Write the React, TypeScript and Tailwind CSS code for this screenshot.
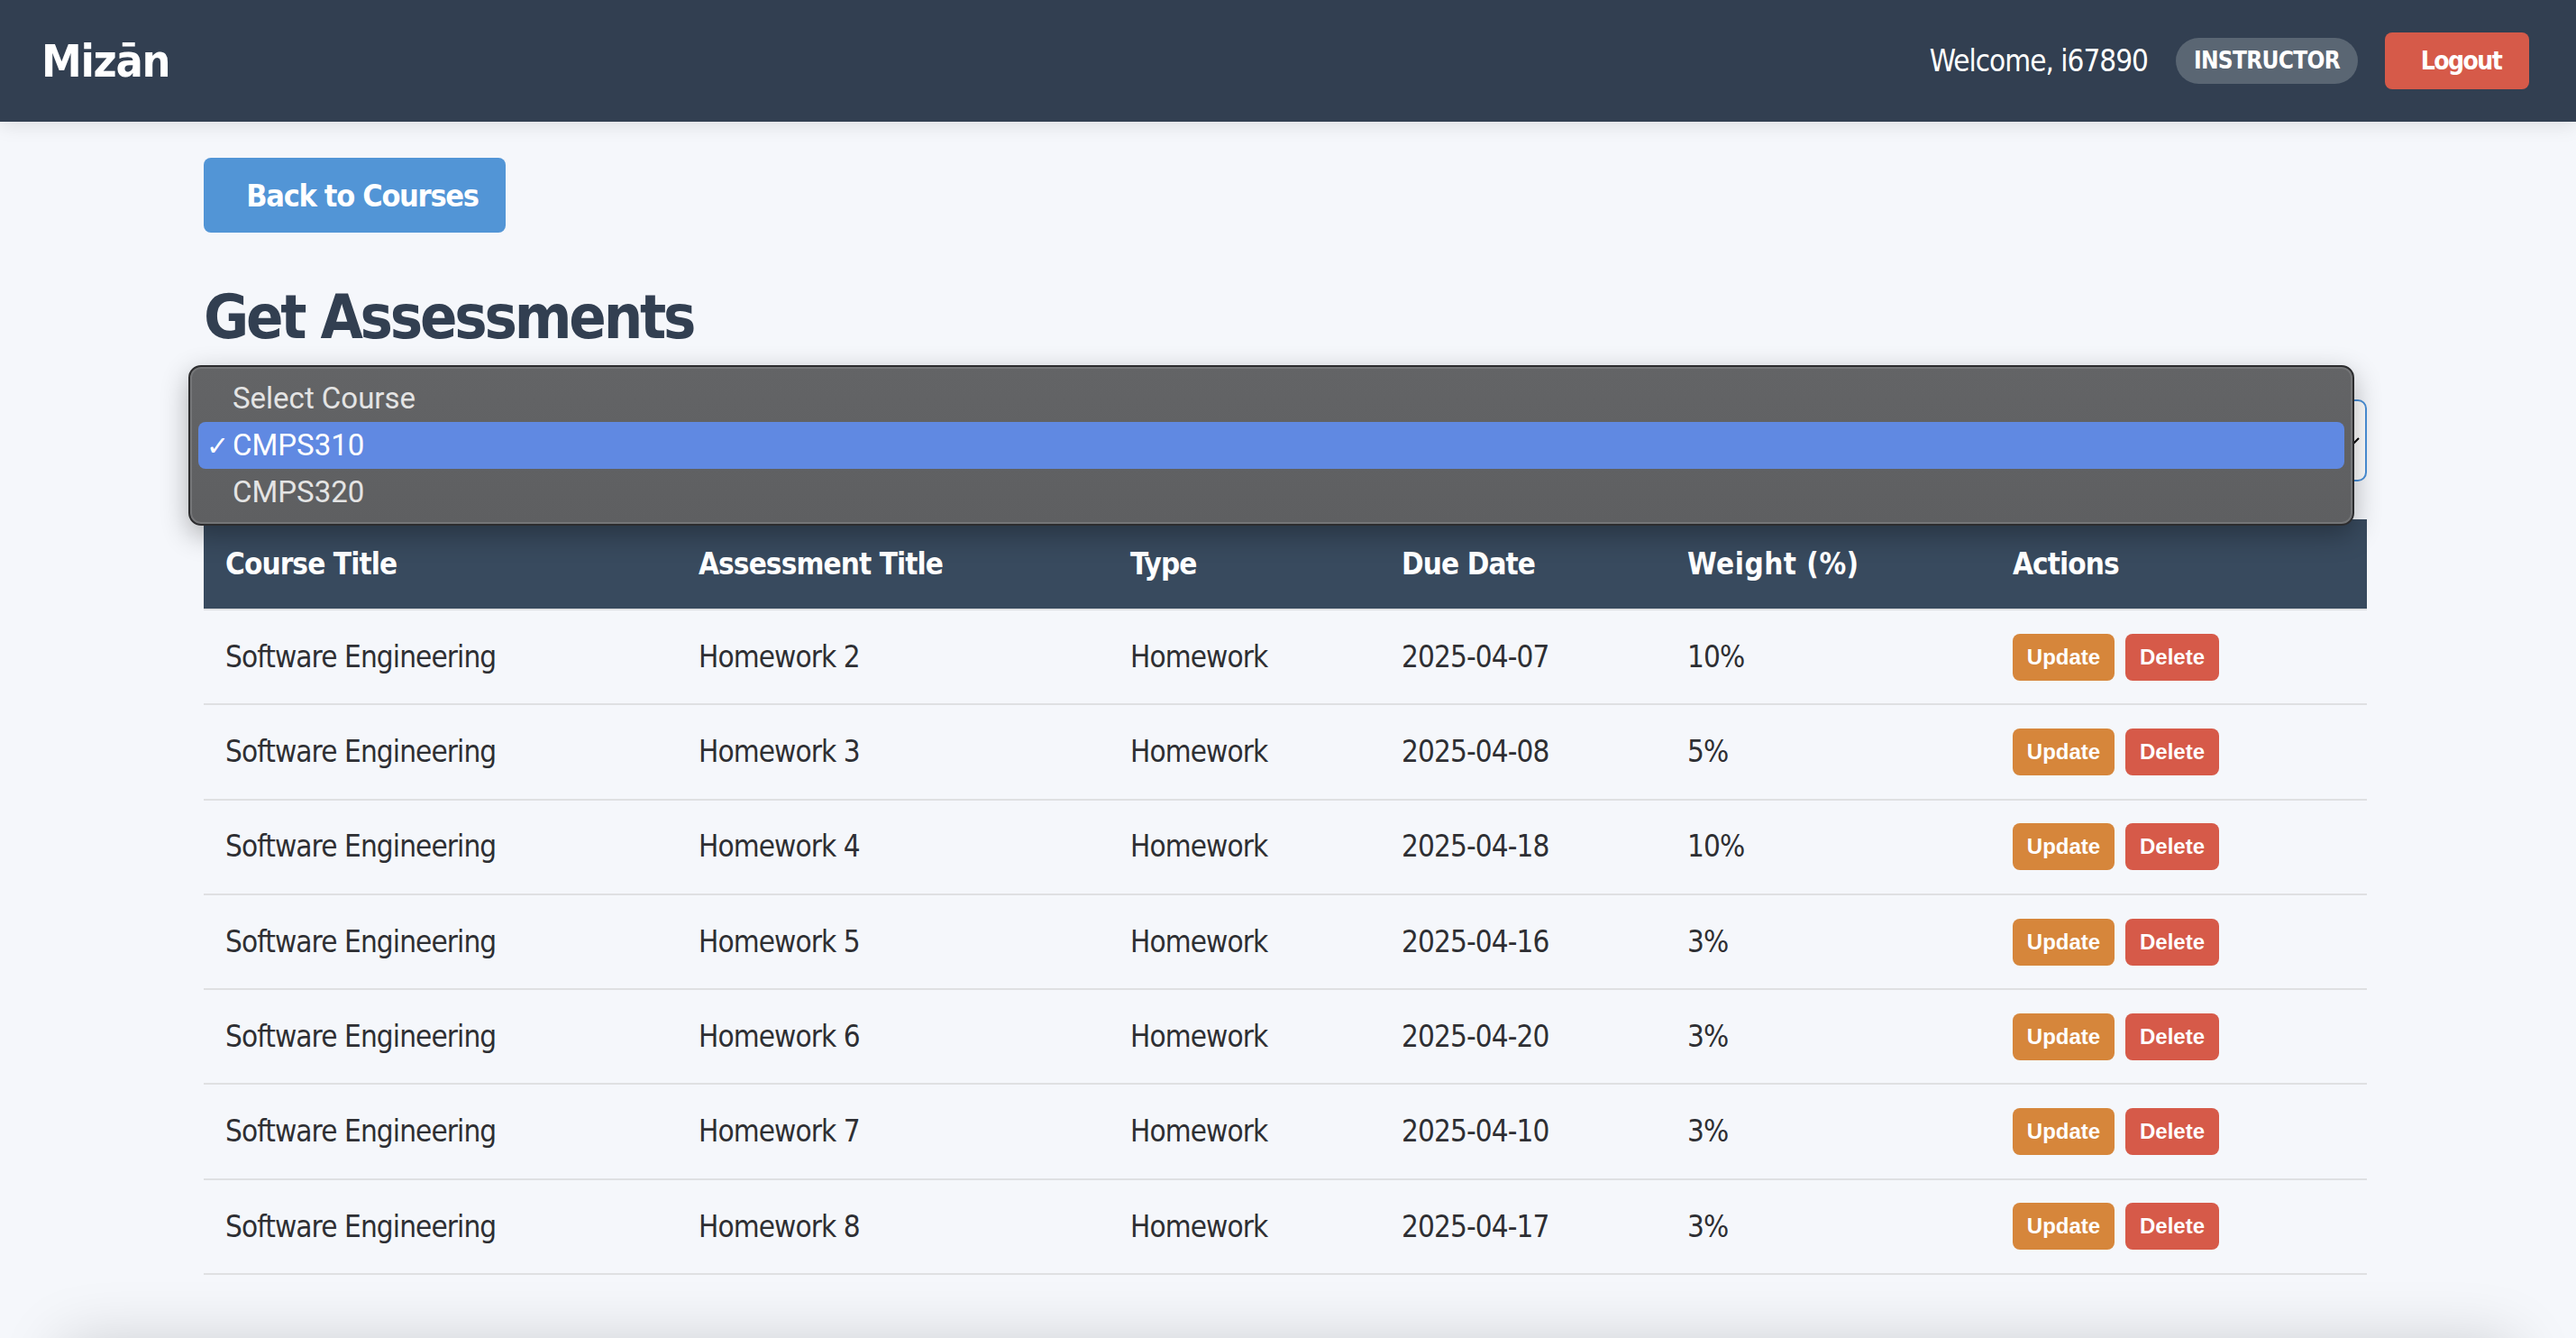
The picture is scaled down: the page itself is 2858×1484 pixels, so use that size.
const rows = [
  { title: "Homework 2", due: "2025-04-07", weight: "10%" },
  { title: "Homework 3", due: "2025-04-08", weight: "5%" },
  { title: "Homework 4", due: "2025-04-18", weight: "10%" },
  { title: "Homework 5", due: "2025-04-16", weight: "3%" },
  { title: "Homework 6", due: "2025-04-20", weight: "3%" },
  { title: "Homework 7", due: "2025-04-10", weight: "3%" },
  { title: "Homework 8", due: "2025-04-17", weight: "3%" },
];

const headers = ["Course Title", "Assessment Title", "Type", "Due Date", "Weight (%)", "Actions"];

export default function App() {
  return (
    <div className="h-[1484px] overflow-hidden bg-[#f5f7fb] font-['DejaVu_Sans',sans-serif] font-stretch-condensed text-[#2e2f33]">
      {/* Header */}
      <header className="relative z-10 flex h-[135px] items-center justify-between bg-[#323f51] pl-[46px] pr-[52px] shadow-[0_4px_20px_rgba(0,0,0,0.1)]">
        <div className="text-[50px] font-bold leading-none tracking-[-1.3px] text-white">Mizān</div>
        <div className="flex items-center">
          <span className="text-[33px] tracking-[-1px] text-white">Welcome, i67890</span>
          <span className="ml-[31px] flex h-[51px] w-[202px] items-center justify-center rounded-full bg-[#5a6673] text-[26px] font-bold tracking-[-0.7px] text-white">
            INSTRUCTOR
          </span>
          <button className="ml-[30px] h-[63px] w-[160px] rounded-lg bg-[#d65a49] pl-[9px] text-[28px] font-bold tracking-[-1.5px] text-white">
            Logout
          </button>
        </div>
      </header>

      <main className="relative px-[226px] pr-[232px] pt-[40px]">
        <button className="h-[83px] w-[335px] rounded-lg bg-[#5295d6] pl-[17px] pt-[2px] text-[34px] font-bold tracking-[-1.3px] text-white">
          Back to Courses
        </button>
        <h1 className="mt-[54px] text-[68px] font-bold leading-[80px] tracking-[-3.2px] text-[#323f51]">Get Assessments</h1>

        {/* Select + open menu */}
        <div className="relative mt-[51px] flex h-[91px] items-center justify-end rounded-[10px] border-2 border-[#4a90d9] bg-white pr-[6px]">
          <svg width="14" height="14" viewBox="0 0 14 14" className="text-black">
            <path d="M1 4l6 6 6-6" fill="none" stroke="currentColor" strokeWidth="2" />
          </svg>
          <div className="absolute left-[-19px] top-[-40px] z-20 flex h-[178px] w-[2403px] flex-col justify-center rounded-[14px] border-2 border-[#2c2c2e] bg-gradient-to-b from-[#636466] to-[#5e5f61] px-[9px] font-['Roboto',sans-serif] font-stretch-normal text-[33px] text-[#e4e4e4] shadow-[inset_0_0_0_2px_#747577,0_10px_30px_rgba(0,0,0,0.3)]">
            <div className="flex h-[52px] items-center pl-[38px]">Select Course</div>
            <div className="relative flex h-[52px] items-center rounded-lg bg-[#6089e2] pl-[38px] text-white">
              <span className="absolute left-[9px] text-[30px]">✓</span>
              CMPS310
            </div>
            <div className="flex h-[52px] items-center pl-[38px]">CMPS320</div>
          </div>
        </div>

        {/* Table */}
        <table className="mt-[42px] w-[2400px] table-fixed border-collapse text-[33px] tracking-[-0.9px]">
          <colgroup>
            <col className="w-[525px]" />
            <col className="w-[479px]" />
            <col className="w-[301px]" />
            <col className="w-[317px]" />
            <col className="w-[361px]" />
            <col className="w-[417px]" />
          </colgroup>
          <thead>
            <tr className="h-[100px] bg-[#384a5e] text-white">
              {headers.map((h) => (
                <th key={h} className={h === "Weight (%)" ? "px-[24px] text-left font-bold tracking-[0.5px]" : "px-[24px] text-left font-bold"}>
                  {h}
                </th>
              ))}
            </tr>
          </thead>
          <tbody>
            {rows.map((r) => (
              <tr key={r.title} className="h-[105.3px] border-t-2 border-b-2 border-[#dfe0e2]">
                <td className="px-[24px]">Software Engineering</td>
                <td className="px-[24px]">{r.title}</td>
                <td className="px-[24px]">Homework</td>
                <td className="px-[24px]">{r.due}</td>
                <td className="px-[24px]">{r.weight}</td>
                <td className="px-[24px]">
                  <div className="flex gap-[12px] font-['Liberation_Sans',sans-serif] font-stretch-normal tracking-normal">
                    <button className="h-[52px] w-[113px] rounded-lg bg-[#d6863b] text-[24px] font-bold text-white">Update</button>
                    <button className="h-[52px] w-[104px] rounded-lg bg-[#d65a49] text-[24px] font-bold text-white">Delete</button>
                  </div>
                </td>
              </tr>
            ))}
          </tbody>
        </table>
      </main>

      {/* Footer sits just below the fold, only its shadow shows */}
      <footer className="mx-[70px] mt-[76px] h-[80px] bg-[#323f51] shadow-[0_0_70px_rgba(0,0,0,0.18)]" />
    </div>
  );
}
